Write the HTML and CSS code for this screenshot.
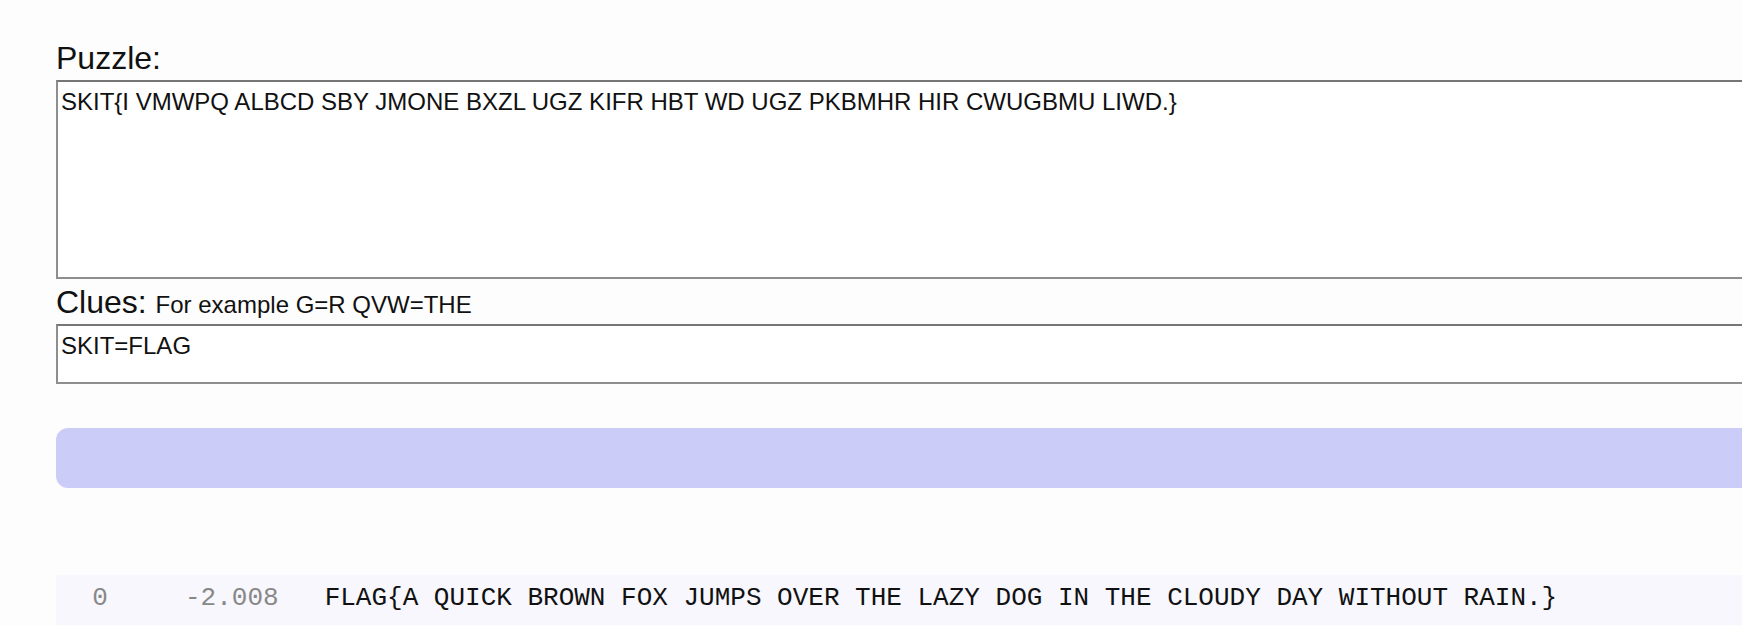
FILE: index.html
```html
<!DOCTYPE html>
<html lang="en">
<head>
<meta charset="utf-8">
<title>Puzzle solver</title>
<link rel="stylesheet" href="styles.css">
</head>
<body>
<main class="page">
  <label class="label" for="puzzle">Puzzle:</label>
  <textarea id="puzzle" class="box box-puzzle">SKIT{I VMWPQ ALBCD SBY JMONE BXZL UGZ KIFR HBT WD UGZ PKBMHR HIR CWUGBMU LIWD.}</textarea>
  <label class="label label-clues" for="clues">Clues: <span class="hint">For example G=R QVW=THE</span></label>
  <textarea id="clues" class="box box-clues">SKIT=FLAG</textarea>
  <div class="bar"></div>
  <div class="result">
    <span class="cell cell-rank">0</span>
    <span class="cell cell-score">-2.008</span>
    <span class="cell cell-text">FLAG{A QUICK BROWN FOX JUMPS OVER THE LAZY DOG IN THE CLOUDY DAY WITHOUT RAIN.}</span>
  </div>
</main>
</body>
</html>
```
FILE: styles.css
```css
html {
  overflow: hidden;
}
body {
  margin: 0;
  background: #fdfdfd;
  font-family: "Liberation Sans", Arial, Helvetica, sans-serif;
  color: #111;
}
.page {
  width: 2000px;
  padding: 40px 0 0 56px;
  display: flex;
  flex-direction: column;
}
.label {
  display: block;
  font-size: 32px;
  line-height: 36px;
  margin-bottom: 4px;
}
.label-clues {
  margin-top: 5px;
  margin-bottom: 1px;
}
.hint {
  font-size: 24px;
}
.box {
  display: block;
  box-sizing: border-box;
  width: 1800px;
  margin: 0;
  padding: 6px 3px 2px;
  font-family: "Liberation Sans", Arial, Helvetica, sans-serif;
  font-size: 24px;
  line-height: 28px;
  color: #111;
  background: #fff;
  border: 2px solid #8e8e8e;
  border-top-color: #767676;
  resize: none;
  outline: none;
}
.box-puzzle {
  height: 199px;
}
.box-clues {
  height: 60px;
}
.bar {
  width: 1800px;
  height: 60px;
  margin-top: 44px;
  background: #ccccf9;
  border-radius: 12px;
}
.result {
  margin-top: 87px;
  width: 1800px;
  height: 50px;
  box-sizing: border-box;
  padding-top: 8px;
  background: #f7f7fd;
  display: flex;
  font-family: "Liberation Mono", "Courier New", monospace;
  font-size: 26px;
  line-height: 30px;
  white-space: pre;
}
.cell-rank {
  width: 88px;
  text-align: center;
  color: #888;
}
.cell-score {
  padding-left: 41px;
  padding-right: 46px;
  color: #888;
}
.cell-text {
  color: #111;
}
```
